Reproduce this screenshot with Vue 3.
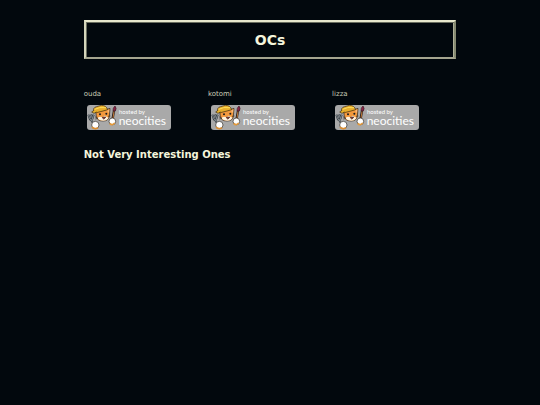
<template>
  <main class="page">
    <header class="title-box">
      <h1>OCs</h1>
    </header>

    <!-- Characters -->
    <section class="characters">
      <article v-for="name in characters" :key="name" class="character">
        <p>{{ name }}</p>
        <a href="#" class="badge" :aria-label="name">
          <svg viewBox="0 0 252 75">
            <rect width="252" height="75" rx="9" fill="#a9a9a9" />

            <!-- Fork and left paw -->
            <path d="M4 29l5 14 7 2M12 28l4 12M20 29l-4 13M12 44l12 20" fill="none" stroke="#343c42" stroke-width="6" />
            <path d="M4 29l5 14 7 2M12 28l4 12M20 29l-4 13M12 44l12 20" fill="none" stroke="#9da4a9" stroke-width="2" />
            <circle cx="25" cy="60" r="11" fill="#fff" stroke="#27221e" stroke-width="2" />
            <path d="M15 66q8 9 18 2" fill="none" stroke="#dc8d2f" stroke-width="5" />

            <!-- Head -->
            <path d="M26 17l2 18q3 13 20 13 17 0 19-14l2-24-12 4-18 1z" fill="#f3993d" stroke="#282018" stroke-width="2" />
            <path d="M31 38l8-3 8 2 6-5 11 6q-4 9-15 9-13 0-18-9z" fill="#fff3df" />
            <path d="M60 17l7-4-1 12z" fill="#f8b878" />
            <path d="M21 20Q16 8 29 5L43 1q15 0 19 13l-14 4-20 5z" fill="#e8ad2c" stroke="#39290d" stroke-width="2" />
            <path d="M23 13q14-8 34-5" fill="none" stroke="#ffdf58" stroke-width="3" />
            <path d="M21 16l-7 5 7 4 8-4" fill="#e8b52e" stroke="#39290d" stroke-width="2" />
            <circle cx="39" cy="28" r="3" fill="#191b20" />
            <circle cx="58" cy="26" r="3" fill="#191b20" />
            <path d="M46 37l10-1q-3 6-6 6-3-1-4-5z" fill="#a83d30" stroke="#291716" stroke-width="2" />
            <path d="M24 36l8 1M25 42l8-2M63 34l7-1" stroke="#322820" stroke-width="2" />

            <!-- Brush and right paw -->
            <path d="M81 17l-4 24" stroke="#29211f" stroke-width="7" />
            <path d="M81 19l-3 20" stroke="#bd7535" stroke-width="3" />
            <path d="M78 17q-1-8 6-14 6 7 1 15z" fill="#8b2545" stroke="#3b1525" stroke-width="2" />
            <circle cx="76" cy="49" r="10" fill="#fff" stroke="#27221e" stroke-width="2" />
            <path d="M68 55q7 8 15-1" fill="none" stroke="#e49a3b" stroke-width="5" />

            <text x="96" y="27" class="hosted">hosted by</text>
            <text x="95" y="60" class="brand">neocities</text>
          </svg>
        </a>
      </article>
    </section>

    <h2>Not Very Interesting Ones</h2>
  </main>
</template>

<script setup>
const characters = ['ouda', 'kotomi', 'lizza']
</script>

<style>
body {
  background: #02080d;
}
</style>

<style scoped>
.page {
  box-sizing: border-box;
  width: 69%;
  margin: 0 auto;
  padding-top: 20px;
  color: #f5f5dc;
  font-family: "DejaVu Sans", Verdana, sans-serif;
}

.title-box {
  padding: 10px 9px 8px;
  border: 2px solid;
  border-color: #e8e8cd #858970 #a5a58f #d4d5bb;
  box-shadow: inset 1px 1px #696d5f, inset -1px 0 #b0b299;
  text-align: center;
}

h1 {
  margin: 0;
  font-size: 14px;
  line-height: 17px;
}

.characters {
  display: grid;
  grid-template-columns: repeat(3, 1fr);
  margin-top: 31px;
}

.character p {
  margin: 0;
  color: #c8cbb4;
  font-size: 7px;
  line-height: 9px;
}

.badge {
  display: block;
  width: 84px;
  margin: 6px 3px 0;
}

.badge svg {
  display: block;
  width: 100%;
}

.hosted,
.brand {
  fill: #fff;
  font-family: Lato, sans-serif;
}

.hosted {
  font-size: 18px;
}

.brand {
  font-size: 36px;
}

h2 {
  margin: 18px 0 0;
  font-size: 10px;
  line-height: 14px;
}
</style>
